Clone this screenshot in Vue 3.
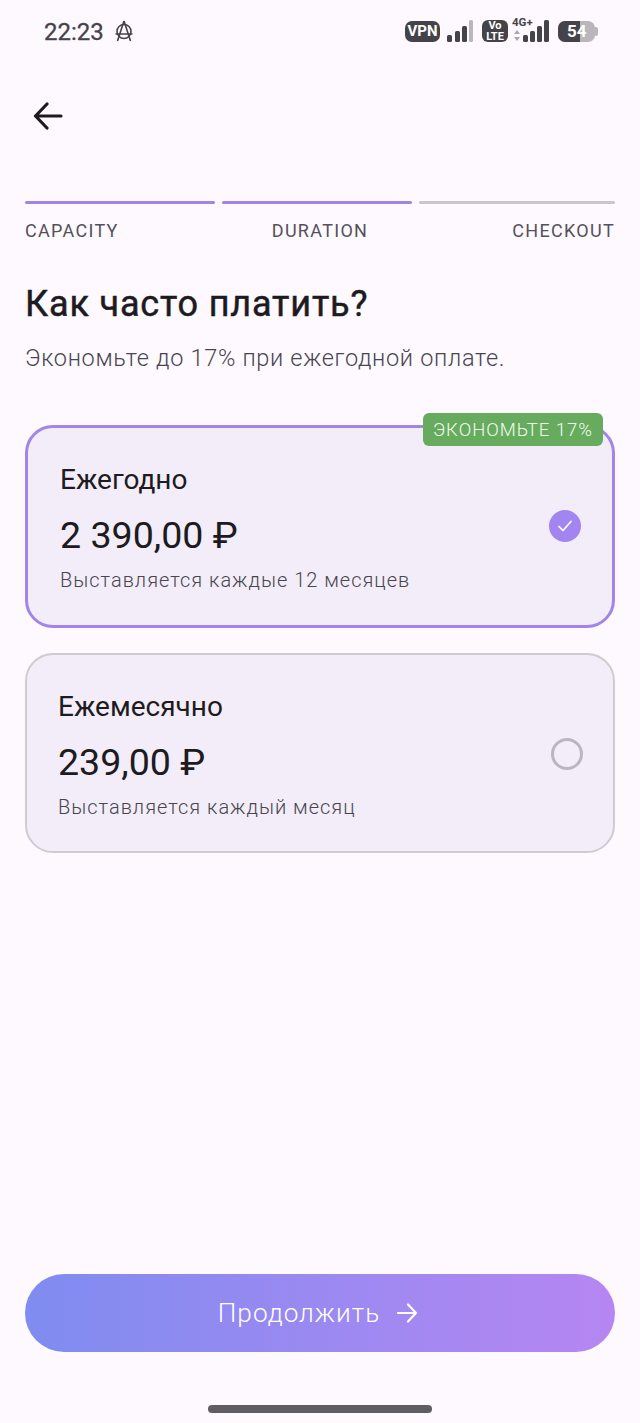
<script setup>
const steps = [
  { label: 'CAPACITY', done: true },
  { label: 'DURATION', done: true },
  { label: 'CHECKOUT', done: false }
]

const plans = [
  { title: 'Ежегодно', price: '2 390,00 ₽', note: 'Выставляется каждые 12 месяцев', selected: true },
  { title: 'Ежемесячно', price: '239,00 ₽', note: 'Выставляется каждый месяц', selected: false }
]
</script>

<template>
  <div class="screen">
    <div class="status">
      <div class="status-left">
        <span class="time">22:23</span>
        <svg class="anarchy" width="22" height="24" viewBox="0 0 22 24" fill="none" stroke="#45434a" stroke-width="1.6">
          <circle cx="11" cy="12.5" r="7" />
          <path d="M11 2 L4.5 22 M11 2 L17.5 22 M2.5 15 H19.5" />
        </svg>
      </div>
      <div class="status-right">
        <span class="pill vpn">VPN</span>
        <svg width="28" height="22" viewBox="0 0 28 22">
          <rect x="1" y="15" width="5" height="7" rx="1.5" fill="#45434a" />
          <rect x="9" y="11" width="5" height="11" rx="1.5" fill="#45434a" />
          <rect x="16" y="6" width="5" height="16" rx="1.5" fill="#45434a" />
          <rect x="23" y="0" width="4" height="22" rx="1.5" fill="#b9b6bc" />
        </svg>
        <span class="pill volte">Vo<br />LTE</span>
        <div class="net">
          <span class="net-label">4G+</span>
          <svg width="38" height="22" viewBox="0 0 38 22">
            <path d="M5 10 L8 14 H2 Z M5 21 L8 17 H2 Z" fill="#a9a6ae" />
            <rect x="11" y="15" width="5" height="7" rx="1.5" fill="#45434a" />
            <rect x="18" y="11" width="5" height="11" rx="1.5" fill="#45434a" />
            <rect x="25" y="6" width="5" height="16" rx="1.5" fill="#45434a" />
            <rect x="32" y="0" width="5" height="22" rx="1.5" fill="#45434a" />
          </svg>
        </div>
        <div class="battery">
          <div class="battery-fill"></div>
          <span class="battery-text">54</span>
          <span class="battery-cap"></span>
        </div>
      </div>
    </div>

    <div class="topbar">
      <svg width="30" height="28" viewBox="0 0 30 28" fill="none" stroke="#1d1b20" stroke-width="3.2" stroke-linecap="round" stroke-linejoin="round">
        <path d="M2.5 14 H28 M14 2 L2.5 14 L14 26" />
      </svg>
    </div>

    <div class="step-bars">
      <div v-for="step in steps" :key="step.label" class="step-bar" :class="{ done: step.done }"></div>
    </div>
    <div class="step-labels">
      <span v-for="step in steps" :key="step.label" class="step-label">{{ step.label }}</span>
    </div>

    <h1 class="heading">Как часто платить?</h1>
    <p class="sub">Экономьте до 17% при ежегодной оплате.</p>

    <div class="plans">
      <div v-for="plan in plans" :key="plan.title" class="plan" :class="{ selected: plan.selected }">
        <span v-if="plan.selected" class="badge">ЭКОНОМЬТЕ 17%</span>
        <div class="plan-text">
          <div class="plan-title">{{ plan.title }}</div>
          <div class="plan-price">{{ plan.price }}</div>
          <div class="plan-note">{{ plan.note }}</div>
        </div>
        <div v-if="plan.selected" class="radio-on">
          <svg width="16" height="14" viewBox="0 0 16 14" fill="none" stroke="#fff" stroke-width="1.7" stroke-linecap="round" stroke-linejoin="round">
            <path d="M2 7.5 L6 11.5 L14 2.5" />
          </svg>
        </div>
        <div v-else class="radio-off"></div>
      </div>
    </div>

    <div class="spacer"></div>

    <button class="continue">
      <span>Продолжить</span>
      <svg width="22" height="20" viewBox="0 0 22 20" fill="none" stroke="#fff" stroke-width="2.2" stroke-linecap="round" stroke-linejoin="round">
        <path d="M2 10 H20 M12 1.5 L20 10 L12 18.5" />
      </svg>
    </button>

    <div class="home-row">
      <div class="home"></div>
    </div>
  </div>
</template>

<style scoped>
.screen {
  width: 640px;
  height: 1423px;
  display: flex;
  flex-direction: column;
  background: #fdf9ff;
  font-family: Roboto, "Noto Sans", sans-serif;
  color: #1d1b20;
  overflow: hidden;
}

.status {
  height: 62px;
  padding: 0 45px 0 44px;
  display: flex;
  justify-content: space-between;
  align-items: center;
  color: #45434a;
}

.status-left {
  display: flex;
  align-items: center;
  gap: 9px;
  margin-top: 2px;
}

.time {
  font-size: 24px;
  -webkit-text-stroke: 0.3px #45434a;
}

.anarchy {
  margin-top: -3px;
}

.status-right {
  display: flex;
  align-items: center;
  gap: 6px;
}

.pill {
  background: #45434a;
  color: #fff;
  font-weight: 700;
  text-align: center;
}

.vpn {
  width: 35px;
  height: 21px;
  border-radius: 7px;
  font-size: 15px;
  line-height: 21px;
}

.volte {
  width: 26px;
  height: 22px;
  margin-left: 2px;
  border-radius: 6px;
  font-size: 11px;
  line-height: 11px;
}

.net {
  position: relative;
  width: 38px;
  height: 22px;
  margin-left: -2px;
}

.net svg {
  display: block;
}

.net-label {
  position: absolute;
  left: 0;
  top: -4px;
  font-size: 11.5px;
  font-weight: 700;
  line-height: 12px;
}

.battery {
  position: relative;
  width: 37px;
  height: 21px;
  margin-left: 2px;
  background: #b9b6bc;
  border-radius: 7px;
}

.battery-fill {
  width: 22px;
  height: 21px;
  background: #45434a;
  border-radius: 7px 0 0 7px;
}

.battery-text {
  position: absolute;
  left: 9px;
  top: 0;
  font-size: 17px;
  font-weight: 700;
  line-height: 21px;
  color: #fff;
}

.battery-cap {
  position: absolute;
  right: -3px;
  top: 6px;
  width: 3px;
  height: 9px;
  background: #b9b6bc;
  border-radius: 0 2px 2px 0;
}

.topbar {
  height: 139px;
  padding: 40px 0 0 33px;
  box-sizing: border-box;
}

.step-bars {
  display: flex;
  gap: 7px;
  margin: 0 25px;
}

.step-bar {
  flex: 0 0 190px;
  height: 3px;
  border-radius: 2px;
  background: #cac6ce;
}

.step-bar:last-child {
  flex: 1;
}

.step-bar.done {
  background: #a085e4;
}

.step-labels {
  display: grid;
  grid-template-columns: 1fr 1fr 1fr;
  margin: 16px 25px 0;
}

.step-label {
  font-size: 18px;
  line-height: 22px;
  letter-spacing: 1.3px;
  color: #55515b;
}

.step-label:nth-child(2) {
  text-align: center;
}

.step-label:nth-child(3) {
  text-align: right;
}

.heading {
  margin: 39px 25px 0;
  font-size: 36px;
  line-height: 46px;
  font-weight: 400;
  letter-spacing: 0.85px;
  -webkit-text-stroke: 0.5px #1d1b20;
}

.sub {
  margin: 16px 25px 0;
  font-size: 23.5px;
  font-weight: 300;
  line-height: 30px;
  letter-spacing: 0.69px;
  color: #49454f;
}

.plans {
  margin: 52px 25px 0;
  display: flex;
  flex-direction: column;
  gap: 25px;
}

.plan {
  position: relative;
  height: 200px;
  box-sizing: border-box;
  padding: 0 31px;
  display: flex;
  justify-content: space-between;
  align-items: center;
  background: #f2edf8;
  border: 2px solid #cfcbd3;
  border-radius: 28px;
}

.plan.selected {
  height: 203px;
  padding-left: 32px;
  border: 3px solid #a285e8;
}

.plan-text {
  padding-top: 3px;
}

.plan-title {
  font-size: 28px;
  line-height: 34px;
}

.plan-price {
  margin-top: 16px;
  font-size: 37.6px;
  line-height: 44px;
}

.plan-note {
  margin-top: 10px;
  font-size: 20px;
  font-weight: 300;
  line-height: 26px;
  letter-spacing: 1px;
  color: #49454f;
}

.badge {
  position: absolute;
  top: -15px;
  right: 9px;
  height: 33px;
  padding: 0 10px;
  display: flex;
  align-items: center;
  background: #67ab5e;
  border-radius: 6px;
  color: #f2fbef;
  font-size: 18.5px;
  font-weight: 300;
  letter-spacing: 1px;
}

.radio-on {
  width: 32px;
  height: 32px;
  margin-top: -2px;
  border-radius: 50%;
  background: #a285f0;
  display: flex;
  align-items: center;
  justify-content: center;
}

.radio-off {
  width: 32px;
  height: 32px;
  margin-top: 1px;
  margin-right: -1px;
  box-sizing: border-box;
  border: 3px solid #bab6be;
  border-radius: 50%;
}

.spacer {
  flex: 1;
}

.continue {
  height: 78px;
  margin: 0 25px;
  padding: 0 4px 0 0;
  border: none;
  border-radius: 39px;
  background: linear-gradient(90deg, #7f8cf0, #b686f2);
  display: flex;
  align-items: center;
  justify-content: center;
  gap: 16px;
  color: #fff;
  font-family: inherit;
  font-size: 26.2px;
  font-weight: 300;
  letter-spacing: 1px;
}

.home-row {
  height: 71px;
  display: flex;
  justify-content: center;
  padding-top: 53px;
  box-sizing: border-box;
}

.home {
  width: 224px;
  height: 8px;
  border-radius: 4px;
  background: #5f5c63;
}
</style>
